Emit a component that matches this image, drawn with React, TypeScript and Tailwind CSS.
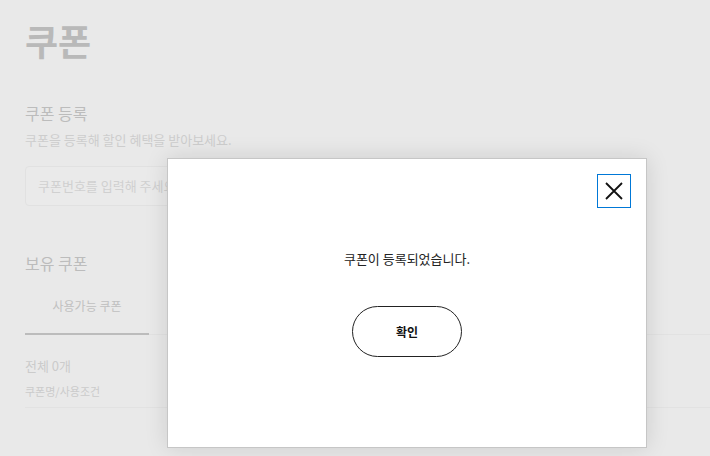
export default function App() {
  return (
    <div
      className="relative h-[456px] w-[710px] overflow-hidden bg-[#e9e9e9]"
      style={{ fontFamily: '"Noto Sans CJK KR", "Noto Sans", sans-serif' }}
    >
      {/* page behind the dimmed overlay */}
      <div className="pl-[25px] pt-[20px]">
        <h1 className="text-[36px] font-bold leading-[40px] text-[#b9b9b9]">쿠폰</h1>

        <section className="mt-[42px]">
          <h2 className="text-[16px] leading-[22px] text-[#bcbcbc]">쿠폰 등록</h2>
          <p className="mt-[7px] text-[13px] leading-[17px] text-[#cdcdcd]">
            쿠폰을 등록해 할인 혜택을 받아보세요.
          </p>
          <div className="mt-[18px] flex h-[40px] w-[600px] items-center rounded-[4px] border border-[#e1e1e1] bg-[#eaeaea] px-[12px]">
            <span className="text-[13px] text-[#d0d0d0]">쿠폰번호를 입력해 주세요</span>
          </div>
        </section>

        <section className="mt-[46px]">
          <h2 className="text-[16px] leading-[22px] text-[#bcbcbc]">보유 쿠폰</h2>
          <div className="mt-[20px] flex border-b border-[#e2e2e2]">
            <div className="-mb-px w-[124px] border-b-2 border-[#bcbcbc] pb-[19px] pt-[4px] text-center text-[12px] leading-[16px] text-[#c0c0c0]">
              사용가능 쿠폰
            </div>
          </div>
          <p className="mt-[22px] text-[13px] leading-[18px] text-[#cbcbcb]">전체 0개</p>
          <div className="mt-[8px] border-b border-[#e2e2e2] pb-[8px] text-[11px] leading-[16px] text-[#cbcbcb]">
            쿠폰명/사용조건
          </div>
        </section>
      </div>

      {/* modal */}
      <div className="absolute left-[167px] top-[158px] flex h-[290px] w-[480px] flex-col items-center border border-[#c6c6c6] bg-white shadow-[0_0_22px_rgba(0,0,0,0.12)]">
        <button className="absolute right-[15px] top-[15px] flex h-[34px] w-[34px] items-center justify-center border border-[#0078d7]">
          <svg width="20" height="20" viewBox="0 0 20 20" fill="none" stroke="#111" strokeWidth="1.8">
            <path d="M2 2 L18 18 M18 2 L2 18" />
          </svg>
        </button>
        <p className="mt-[90px] text-[13px] leading-[20px] text-[#222]">쿠폰이 등록되었습니다.</p>
        <button className="mt-[37px] flex h-[51px] w-[110px] items-center justify-center rounded-full border border-[#222] bg-white text-[12px] font-bold text-[#111]">
          확인
        </button>
      </div>
    </div>
  );
}
